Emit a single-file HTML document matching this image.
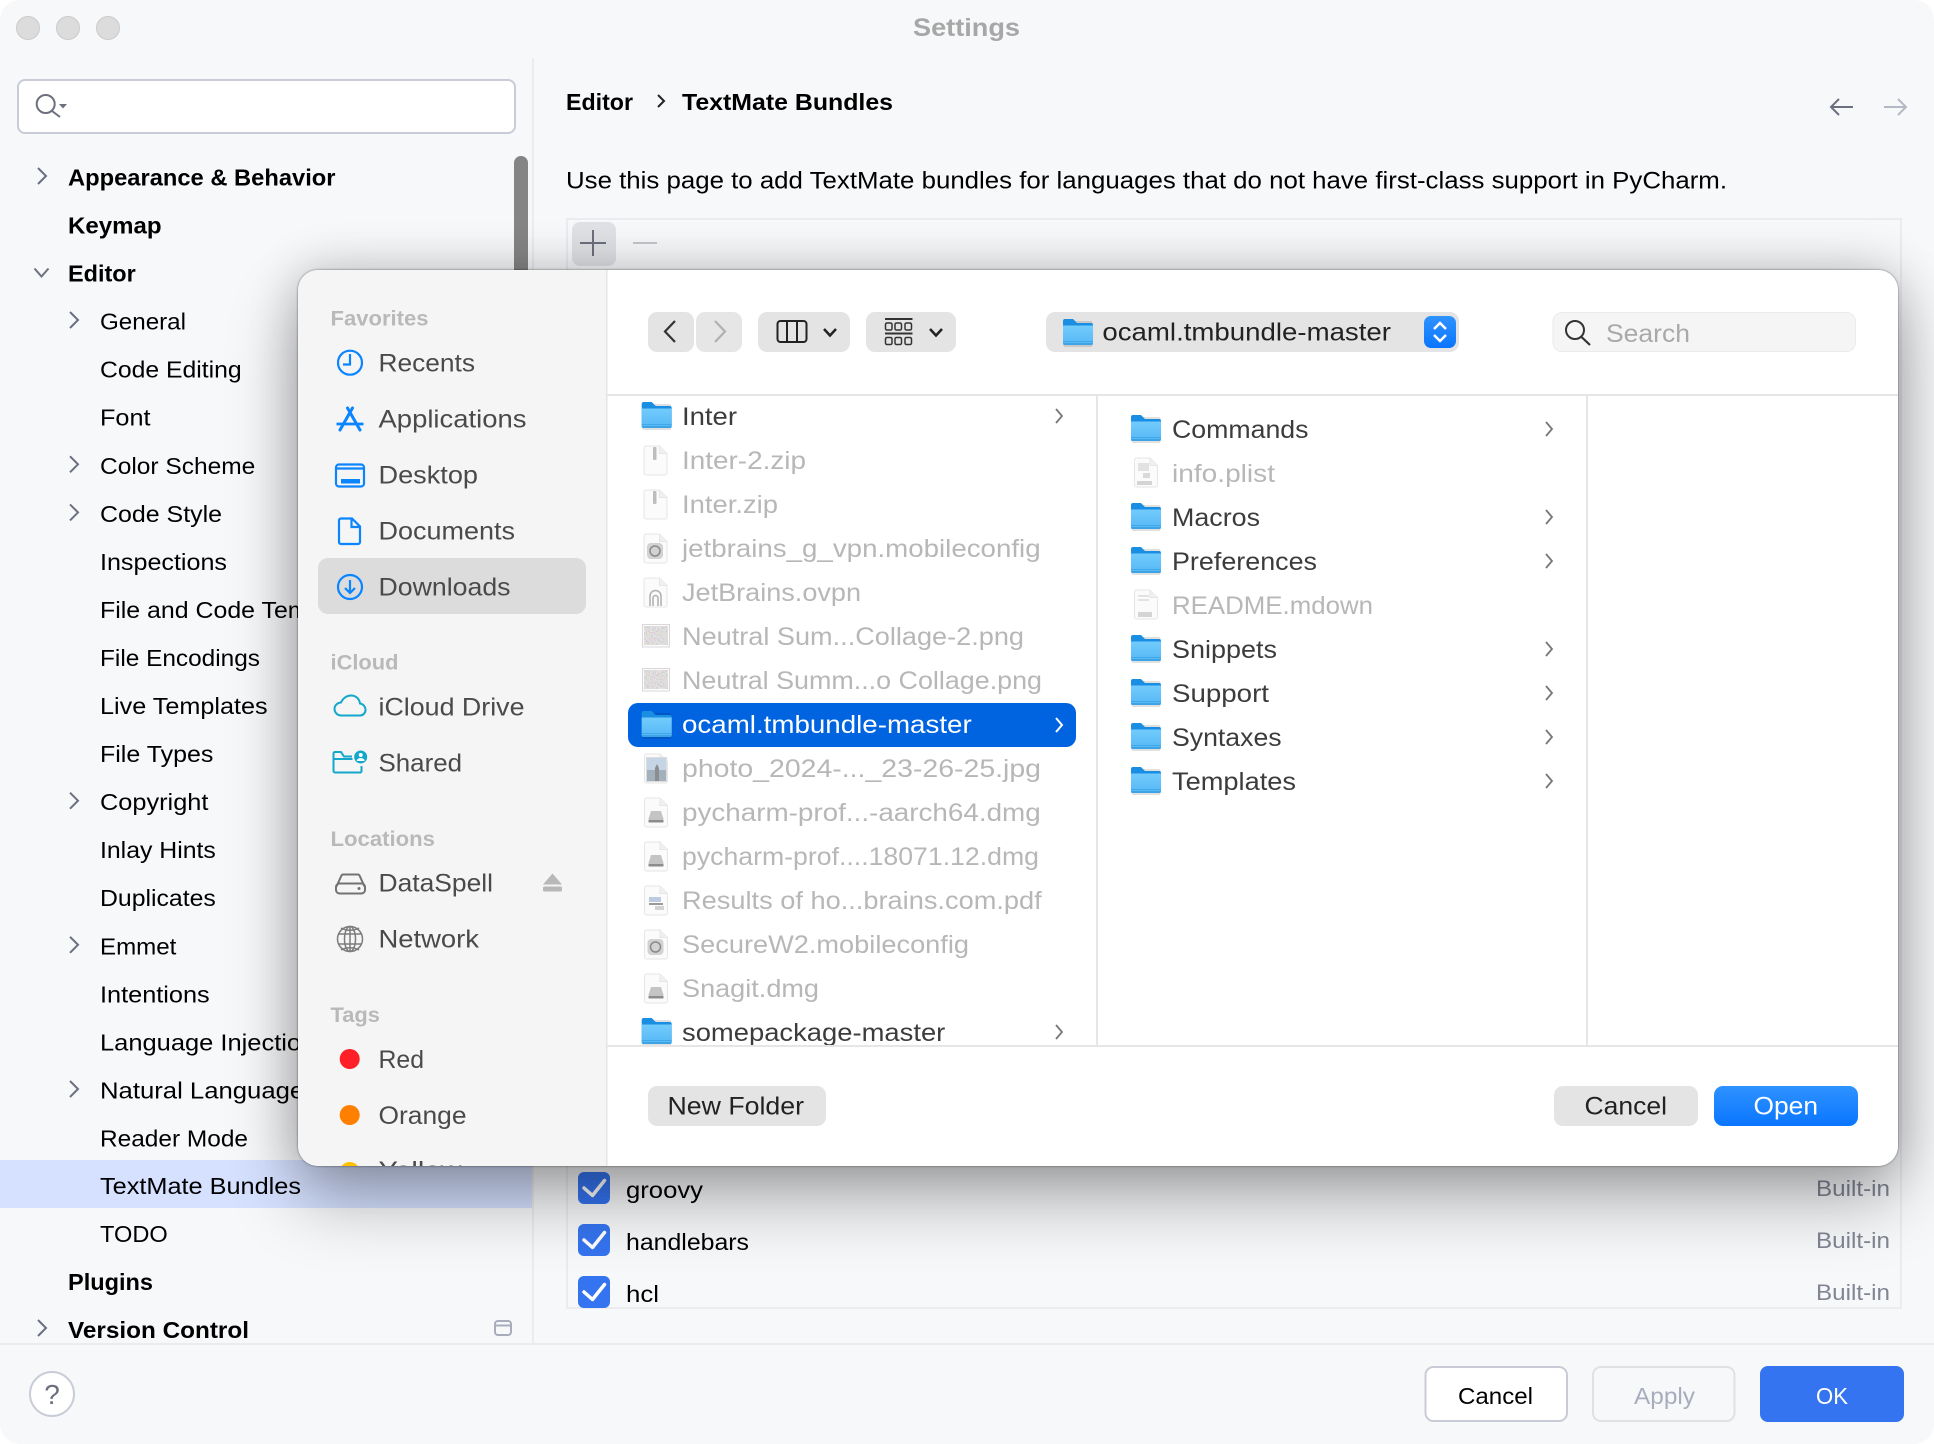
<!DOCTYPE html>
<html><head><meta charset="utf-8"><title>Settings</title>
<style>
html,body{margin:0;padding:0;background:#fff;width:1934px;height:1444px;overflow:hidden}
svg{position:absolute;left:0;top:0}
text{font-family:"Liberation Sans",sans-serif}
#sh{position:absolute;left:298px;top:270px;width:1600px;height:896px;border-radius:20px;box-shadow:0 34px 70px rgba(0,0,0,.30),0 0 50px rgba(0,0,0,.20),0 0 2px rgba(0,0,0,.55)}
.s text{font-size:23.5px;fill:#000}
.s .b{font-weight:bold}
.d text{font-size:25px;fill:#3c3c3c}
.d .f{fill:#b7b7b7}
.d .h{font-size:21px;font-weight:bold;fill:#b9b9b9}
.d .n{fill:#4a4a4a}
</style></head><body>
<svg class="s" width="1934" height="1444" viewBox="0 0 1934 1444">
<rect width="1934" height="1444" rx="20" fill="#f7f8fa"/>
<circle cx="28" cy="28" r="11.5" fill="#dcdcdc" stroke="#cbcbcb"/><circle cx="68" cy="28" r="11.5" fill="#dcdcdc" stroke="#cbcbcb"/><circle cx="108" cy="28" r="11.5" fill="#dcdcdc" stroke="#cbcbcb"/>
<text x="913" y="36" textLength="107" lengthAdjust="spacingAndGlyphs" style="font-size:25px;font-weight:bold;fill:#a7a7a7">Settings</text>
<rect x="532" y="58" width="2" height="1286" fill="#ebecf0"/>
<rect x="0" y="1343" width="1934" height="2" fill="#ebecf0"/>
<rect x="18" y="80" width="497" height="53" rx="7" fill="#fff" stroke="#c9ccd6" stroke-width="2"/>
<g fill="none" stroke="#6c707e" stroke-width="2"><circle cx="45.7" cy="104" r="9"/><path d="M52 111l8 6"/></g><path d="M59 104h8l-4 4.500z" fill="#6c707e"/>
<rect x="514" y="156" width="14" height="150" rx="7" fill="#858585"/>
<rect x="0" y="1160" width="532" height="48" fill="#d5e1ff"/>
<g fill="none" stroke="#6c707e" stroke-width="2"><path d="M38 168l8 8-8 8M34.500 268.500l7 8 7-8M70 312l8 8-8 8M70 456.300l8 8-8 8M70 504.400l8 8-8 8M70 792.700l8 8-8 8M70 936.800l8 8-8 8M70 1081l8 8-8 8M38 1320l8 8-8 8"/></g>
<text class="b" x="68" y="185.500" textLength="267.500" lengthAdjust="spacingAndGlyphs">Appearance &amp; Behavior</text>
<text class="b" x="68" y="233.500" textLength="93.600" lengthAdjust="spacingAndGlyphs">Keymap</text>
<text class="b" x="68" y="281.600" textLength="67.700" lengthAdjust="spacingAndGlyphs">Editor</text>
<text x="100" y="329.600" textLength="86" lengthAdjust="spacingAndGlyphs">General</text>
<text x="100" y="377.700" textLength="141.700" lengthAdjust="spacingAndGlyphs">Code Editing</text>
<text x="100" y="425.700" textLength="50.500" lengthAdjust="spacingAndGlyphs">Font</text>
<text x="100" y="473.800" textLength="155.300" lengthAdjust="spacingAndGlyphs">Color Scheme</text>
<text x="100" y="521.800" textLength="122" lengthAdjust="spacingAndGlyphs">Code Style</text>
<text x="100" y="569.900" textLength="127" lengthAdjust="spacingAndGlyphs">Inspections</text>
<text x="100" y="617.900" textLength="275" lengthAdjust="spacingAndGlyphs">File and Code Templates</text>
<text x="100" y="666" textLength="160" lengthAdjust="spacingAndGlyphs">File Encodings</text>
<text x="100" y="714" textLength="167.600" lengthAdjust="spacingAndGlyphs">Live Templates</text>
<text x="100" y="762.100" textLength="113.400" lengthAdjust="spacingAndGlyphs">File Types</text>
<text x="100" y="810.100" textLength="108.400" lengthAdjust="spacingAndGlyphs">Copyright</text>
<text x="100" y="858.200" textLength="115.800" lengthAdjust="spacingAndGlyphs">Inlay Hints</text>
<text x="100" y="906.200" textLength="115.800" lengthAdjust="spacingAndGlyphs">Duplicates</text>
<text x="100" y="954.300" textLength="76.400" lengthAdjust="spacingAndGlyphs">Emmet</text>
<text x="100" y="1002.300" textLength="109.700" lengthAdjust="spacingAndGlyphs">Intentions</text>
<text x="100" y="1050.400" textLength="228" lengthAdjust="spacingAndGlyphs">Language Injections</text>
<text x="100" y="1098.400" textLength="217" lengthAdjust="spacingAndGlyphs">Natural Languages</text>
<text x="100" y="1146.500" textLength="148" lengthAdjust="spacingAndGlyphs">Reader Mode</text>
<text x="100" y="1194" textLength="201" lengthAdjust="spacingAndGlyphs">TextMate Bundles</text>
<text x="100" y="1242" textLength="67.700" lengthAdjust="spacingAndGlyphs">TODO</text>
<text class="b" x="68" y="1290" textLength="85" lengthAdjust="spacingAndGlyphs">Plugins</text>
<text class="b" x="68" y="1338" textLength="181" lengthAdjust="spacingAndGlyphs">Version Control</text>
<rect x="495" y="1321" width="16" height="14" rx="3" fill="none" stroke="#a8adbd" stroke-width="2"/><path d="M495 1325.500h16" stroke="#a8adbd" stroke-width="2"/>
<text class="b" x="566" y="110" textLength="67" lengthAdjust="spacingAndGlyphs">Editor</text>
<path d="M658 95l6 6-6 6" fill="none" stroke="#222" stroke-width="2"/>
<text class="b" x="682" y="110" textLength="211" lengthAdjust="spacingAndGlyphs">TextMate Bundles</text>
<path d="M1853 107H1831M1839 99l-8 8 8 8" fill="none" stroke="#6c707e" stroke-width="2"/>
<path d="M1884 107H1906M1898 99l8 8-8 8" fill="none" stroke="#b4b8c4" stroke-width="2"/>
<text x="566" y="188.500" textLength="1161" lengthAdjust="spacingAndGlyphs" style="font-size:24.500px">Use this page to add TextMate bundles for languages that do not have first-class support in PyCharm.</text>
<rect x="567" y="219" width="1334" height="1089" fill="none" stroke="#ebecf0" stroke-width="2"/>
<rect x="572" y="222" width="44" height="44" rx="8" fill="#dfe1e5"/>
<path d="M593 230v26M580 243h26" stroke="#6c707e" stroke-width="2"/>
<path d="M633 243h24" stroke="#c4c6cc" stroke-width="2"/>
<rect x="578" y="1172" width="32" height="32" rx="6" fill="#3574f0"/><rect x="578" y="1224" width="32" height="32" rx="6" fill="#3574f0"/><rect x="578" y="1276" width="32" height="32" rx="6" fill="#3574f0"/>
<path d="M584 1188l8.500 7.500 12-15M584 1240l8.500 7.500 12-15M584 1292l8.500 7.500 12-15" fill="none" stroke="#fff" stroke-width="3.500" stroke-linecap="round" stroke-linejoin="round"/>
<text x="626" y="1198" textLength="77" lengthAdjust="spacingAndGlyphs">groovy</text>
<text x="626" y="1250" textLength="123" lengthAdjust="spacingAndGlyphs">handlebars</text>
<text x="626" y="1302" textLength="33" lengthAdjust="spacingAndGlyphs">hcl</text>
<text x="1816" y="1196" textLength="74" lengthAdjust="spacingAndGlyphs" style="font-size:22.500px;fill:#818594">Built-in</text>
<text x="1816" y="1248" textLength="74" lengthAdjust="spacingAndGlyphs" style="font-size:22.500px;fill:#818594">Built-in</text>
<text x="1816" y="1300" textLength="74" lengthAdjust="spacingAndGlyphs" style="font-size:22.500px;fill:#818594">Built-in</text>
<circle cx="52" cy="1394" r="22" fill="#fff" stroke="#c9ccd6" stroke-width="2"/>
<text x="52" y="1404" text-anchor="middle" style="font-size:28px;fill:#6c707e">?</text>
<rect x="1425.500" y="1367" width="141.500" height="54" rx="8" fill="#fff" stroke="#c9ccd6" stroke-width="2"/>
<text x="1458" y="1404" textLength="75" lengthAdjust="spacingAndGlyphs">Cancel</text>
<rect x="1593" y="1367" width="141.500" height="54" rx="8" fill="none" stroke="#dfe1e5" stroke-width="2"/>
<text x="1634" y="1404" textLength="61" lengthAdjust="spacingAndGlyphs" style="fill:#a8adbd">Apply</text>
<rect x="1760" y="1366" width="144" height="56" rx="8" fill="#3574f0"/>
<text x="1816" y="1404" textLength="32" lengthAdjust="spacingAndGlyphs" style="fill:#fff">OK</text>
</svg>
<div id="sh"></div>
<svg class="d" width="1934" height="1444" viewBox="0 0 1934 1444">
<defs>
<clipPath id="dc"><rect x="298" y="270" width="1600" height="896" rx="20"/></clipPath>
<clipPath id="lc"><rect x="607" y="396" width="1291" height="649"/></clipPath>
<linearGradient id="fg" x1="0" y1="0" x2="0" y2="1"><stop offset="0" stop-color="#72cbfc"/><stop offset="1" stop-color="#56b8f5"/></linearGradient>
<linearGradient id="og" x1="0" y1="0" x2="0" y2="1"><stop offset="0" stop-color="#2e92ff"/><stop offset="1" stop-color="#0a76ff"/></linearGradient>
<filter id="nz" x="0" y="0" width="1" height="1"><feTurbulence type="fractalNoise" baseFrequency=".7" numOctaves="2" seed="4"/><feColorMatrix type="matrix" values=".7 0 0 0 .38  0 .7 0 0 .36  0 0 .7 0 .36  0 0 0 0 1"/></filter>
<symbol id="fo" width="30" height="28" viewBox="0 0 30 28" overflow="visible">
<rect x="0.500" y="2" width="29" height="26" rx="2" fill="#000" opacity=".12"/>
<path d="M0 2a2 2 0 0 1 2-2h8l4 4h14a2 2 0 0 1 2 2v18a2 2 0 0 1-2 2H2a2 2 0 0 1-2-2z" fill="#1a8ee2"/>
<path d="M0 6.500h30v17.500a2 2 0 0 1-2 2H2a2 2 0 0 1-2-2z" fill="url(#fg)"/>
<rect x="0" y="22" width="30" height="1" fill="#3fa7ea"/>
<path d="M0 24h30a2 2 0 0 1-2 2H2a2 2 0 0 1-2-2z" fill="#3ca3e6"/>
</symbol>
<symbol id="dp" width="26" height="30" viewBox="0 0 26 30" overflow="visible">
<path d="M1.500 2a2 2 0 0 1 2-2H17l7.500 7.500V27a2 2 0 0 1-2 2h-19a2 2 0 0 1-2-2z" fill="#fbfbfb" stroke="#e6e6e6"/>
<path d="M17 0v7.500h7.500" fill="#f0f0f0" stroke="#e6e6e6"/>
</symbol>
<symbol id="zp" width="26" height="30" viewBox="0 0 26 30" overflow="visible"><use href="#dp"/><rect x="10.500" y="1" width="3.500" height="13" rx="1" fill="#bdbdbd"/></symbol>
<symbol id="cf" width="26" height="30" viewBox="0 0 26 30" overflow="visible"><use href="#dp"/><rect x="4.500" y="9" width="16" height="16" rx="4" fill="#d2d2d2"/><circle cx="12.500" cy="17" r="5" fill="none" stroke="#8a8a8a" stroke-width="1.500"/></symbol>
<symbol id="dm" width="26" height="30" viewBox="0 0 26 30" overflow="visible"><use href="#dp"/><path d="M8 13h10l2.500 8v4h-15v-4z" fill="#c4c4c4"/><rect x="5.500" y="22" width="15" height="2" fill="#8c8c8c"/></symbol>
<symbol id="tb" width="28" height="23" viewBox="0 0 28 23" overflow="visible">
<rect x="0.500" y="0.500" width="27" height="22.500" fill="#fbfbfb" stroke="#d8d8d8"/>
<rect x="2" y="2" width="24" height="19" fill="#b4aea4" filter="url(#nz)"/>
</symbol>
</defs>
<g clip-path="url(#dc)">
<rect x="298" y="270" width="309" height="896" fill="#f5f5f5"/>
<rect x="607" y="270" width="1291" height="896" fill="#fff"/>
<rect x="606" y="270" width="1.500" height="896" fill="#e4e4e4"/>
<rect x="318" y="558" width="268" height="56" rx="10" fill="#dcdcdc"/>

<text class="h" x="330.500" y="325.700" textLength="98" lengthAdjust="spacingAndGlyphs">Favorites</text>
<text class="n" x="378.500" y="371.700" textLength="96.500" lengthAdjust="spacingAndGlyphs">Recents</text>
<text class="n" x="378.500" y="427.700" textLength="148" lengthAdjust="spacingAndGlyphs">Applications</text>
<text class="n" x="378.500" y="483.700" textLength="99.500" lengthAdjust="spacingAndGlyphs">Desktop</text>
<text class="n" x="378.500" y="539.700" textLength="136.500" lengthAdjust="spacingAndGlyphs">Documents</text>
<text class="n" x="378.500" y="595.700" textLength="132" lengthAdjust="spacingAndGlyphs">Downloads</text>
<text class="h" x="330.500" y="669.500" textLength="68" lengthAdjust="spacingAndGlyphs">iCloud</text>
<text class="n" x="378.500" y="715.500" textLength="146" lengthAdjust="spacingAndGlyphs">iCloud Drive</text>
<text class="n" x="378.500" y="771.500" textLength="83.500" lengthAdjust="spacingAndGlyphs">Shared</text>
<text class="h" x="330.500" y="846" textLength="104.500" lengthAdjust="spacingAndGlyphs">Locations</text>
<text class="n" x="378.500" y="891.700" textLength="114.500" lengthAdjust="spacingAndGlyphs">DataSpell</text>
<text class="n" x="378.500" y="947.700" textLength="100.500" lengthAdjust="spacingAndGlyphs">Network</text>
<text class="h" x="330.500" y="1022" textLength="49.500" lengthAdjust="spacingAndGlyphs">Tags</text>
<text class="n" x="378.500" y="1068" textLength="45.500" lengthAdjust="spacingAndGlyphs">Red</text>
<text class="n" x="378.500" y="1124" textLength="88" lengthAdjust="spacingAndGlyphs">Orange</text>
<text class="n" x="378.500" y="1179" textLength="83" lengthAdjust="spacingAndGlyphs">Yellow</text>

<g fill="none" stroke="#0a84ff" stroke-width="2.200">
<circle cx="350" cy="362.700" r="12"/><path d="M350 354v10.500h-7"/>
<circle cx="350" cy="587" r="12"/><path d="M350 580v12.500M345 588l5 5 5-5"/>
<path d="M336.500 424h27" stroke-width="2.800"/><path d="M347.500 408l12.500 22M352.500 408l-12.500 22" stroke-width="3" stroke-linecap="round"/>
<rect x="336" y="464.500" width="28" height="22" rx="3"/><path d="M336 468.500h28" />
<path d="M342 519h10l8 8v15.500a2 2 0 0 1-2 2h-17a2 2 0 0 1-2-2V521a2 2 0 0 1 2-2zM351.500 519v8.500h8.500" transform="translate(0 -.5)"/>
</g>
<rect x="341" y="479" width="19" height="4.500" fill="#0a84ff"/>
<g fill="none" stroke="#12a7cb" stroke-width="2">
<path transform="translate(0 2)" d="M341.500 713.500C336.500 713.500 334.500 709.500 334.500 707C334.500 703 338 700.500 341 700.500C343 696 347 693.500 351 693.500C356.500 693.500 359.500 697.500 360 701.500C363.500 702 365.500 705 365.500 708C365.500 711 363 713.500 360 713.500Z"/>
<path transform="translate(0 4)" d="M352 752.500H344l-3-4.500h-6a1.500 1.500 0 0 0-1.500 1.500V767a1.500 1.500 0 0 0 1.500 1.500h25.500A1.500 1.500 0 0 0 361.500 767v-5M333.500 755h19"/>
</g>
<g transform="translate(0 4)"><circle cx="360.700" cy="753" r="6.500" fill="#12a7cb"/><circle cx="360.700" cy="751" r="2" fill="#fff"/><path d="M356.700 757a4 3 0 0 1 8 0z" fill="#fff"/></g>
<g fill="none" stroke="#727272" stroke-width="2" transform="translate(0 7.500)">
<rect x="336" y="876" width="29" height="10" rx="3.500"/><path d="M336.500 879l5-11a2 2 0 0 1 2-1h14a2 2 0 0 1 2 1l5 11"/>
</g><circle cx="359" cy="888.500" r="1.500" fill="#727272"/>
<g fill="none" stroke="#7c7c7c" stroke-width="1.500" transform="translate(0 10)">
<circle cx="350" cy="929" r="12.500"/><ellipse cx="350" cy="929" rx="5.500" ry="12.500"/><path d="M338 924h24M338 934h24M341 918c5 3 13 3 18 0M341 940c5-3 13-3 18 0M350 916.500v25"/>
</g>
<g transform="translate(0 7.500)"><path d="M552.500 866l9.500 11h-19z" fill="#b8b8b8"/><rect x="543" y="879" width="19" height="5" rx="1.500" fill="#b8b8b8"/></g>
<circle cx="349.700" cy="1059" r="10" fill="#ff1f26"/>
<circle cx="349.700" cy="1115" r="10" fill="#ff8000"/>
<circle cx="349.700" cy="1172" r="10" fill="#ffc000"/>

<rect x="648" y="312" width="46" height="40" rx="9" fill="#e4e4e4"/>
<rect x="696" y="312" width="46" height="40" rx="9" fill="#e6e6e6"/>
<rect x="758" y="312" width="92" height="40" rx="9" fill="#e4e4e4"/>
<rect x="866" y="312" width="90" height="40" rx="9" fill="#e4e4e4"/>
<rect x="1046" y="312" width="413" height="40" rx="9" fill="#e4e4e4"/>
<path d="M675 321l-10 10.500 10 10.500" fill="none" stroke="#333" stroke-width="2.200"/>
<path d="M715 321l10 10.500-10 10.500" fill="none" stroke="#b0b0b0" stroke-width="2.200"/>
<g fill="none" stroke="#222" stroke-width="2">
<rect x="777.500" y="321" width="29" height="21" rx="3"/><path d="M787 321v21M797 321v21"/>
<path d="M824 329l6 6.500 6-6.500M930 329l6 6.500 6-6.500" stroke-width="2.500"/>
</g>
<g fill="none" stroke="#333" stroke-width="1.500">
<path d="M885 319h27.500M885 333.500h27.500" stroke-width="2"/>
<rect x="885.500" y="323" width="6.500" height="7" rx="1.500"/><rect x="895" y="323" width="6.500" height="7" rx="1.500"/><rect x="905" y="323" width="6.500" height="7" rx="1.500"/>
<rect x="885.500" y="337.500" width="6.500" height="7" rx="1.500"/><rect x="895" y="337.500" width="6.500" height="7" rx="1.500"/><rect x="905" y="337.500" width="6.500" height="7" rx="1.500"/>
</g>
<use href="#fo" x="1063" y="319"/>
<text x="1102.400" y="340.500" textLength="288.600" lengthAdjust="spacingAndGlyphs" style="fill:#222">ocaml.tmbundle-master</text>
<rect x="1424" y="316" width="32" height="32" rx="7" fill="url(#og)"/>
<path d="M1434 329l6-6 6 6M1434 335l6 6 6-6" fill="none" stroke="#fff" stroke-width="2.500"/>
<rect x="1553" y="312.500" width="302.500" height="39" rx="9" fill="#f5f5f5" stroke="#ebebeb"/>
<circle cx="1575" cy="330" r="9" fill="none" stroke="#333" stroke-width="2"/><path d="M1581.500 337l8.500 8" stroke="#333" stroke-width="2.200"/>
<text x="1606" y="342" textLength="84" lengthAdjust="spacingAndGlyphs" style="fill:#a9a9a9">Search</text>

<rect x="607" y="394" width="1291" height="2" fill="#e6e6e6"/>
<rect x="1096" y="395" width="2" height="650" fill="#e6e6e6"/>
<rect x="1586" y="395" width="2" height="650" fill="#e6e6e6"/>

<g clip-path="url(#lc)">
<rect x="628" y="703" width="448" height="44" rx="10" fill="#0064e1"/>
<use href="#fo" x="641.700" y="402"/>
<use href="#zp" x="642.500" y="446"/>
<use href="#zp" x="642.500" y="490"/>
<use href="#cf" x="642.500" y="534"/>
<use href="#dp" x="642.500" y="578"/><path d="M650 606v-10a5.500 5.500 0 0 1 11 0v10M653 606v-8a2.500 2.500 0 0 1 5 0v8" fill="none" stroke="#b0b0b0" stroke-width="1.500"/>
<use href="#tb" x="642" y="624"/>
<use href="#tb" x="642" y="668"/>
<use href="#fo" x="641.700" y="711"/>
<use href="#dp" x="643" y="754"/><rect x="647" y="758" width="19" height="23" fill="#a3b1bd"/><rect x="647" y="758" width="19" height="12" fill="#c5d5e6"/><path d="M655 781v-13l2-4 2 4v13z" fill="#8b8d90"/><rect x="646.500" y="757.500" width="20" height="24" fill="none" stroke="#dcdcdc"/>
<use href="#dm" x="643" y="798"/>
<use href="#dm" x="643" y="842"/>
<use href="#dp" x="643" y="886"/><rect x="649" y="897" width="12" height="5" fill="#bccbe2"/><rect x="649" y="903" width="14" height="2" fill="#9a9a9a"/><rect x="655" y="906" width="9" height="4" fill="#d2d2d2"/>
<use href="#cf" x="643" y="930"/>
<use href="#dm" x="643" y="974"/>
<use href="#fo" x="641.700" y="1018"/>

<text x="682" y="425" textLength="55" lengthAdjust="spacingAndGlyphs">Inter</text>
<text class="f" x="682" y="469" textLength="124" lengthAdjust="spacingAndGlyphs">Inter-2.zip</text>
<text class="f" x="682" y="513" textLength="96" lengthAdjust="spacingAndGlyphs">Inter.zip</text>
<text class="f" x="682" y="557" textLength="358.600" lengthAdjust="spacingAndGlyphs">jetbrains_g_vpn.mobileconfig</text>
<text class="f" x="682" y="601" textLength="179" lengthAdjust="spacingAndGlyphs">JetBrains.ovpn</text>
<text class="f" x="682" y="645" textLength="342" lengthAdjust="spacingAndGlyphs">Neutral Sum...Collage-2.png</text>
<text class="f" x="682" y="689" textLength="360" lengthAdjust="spacingAndGlyphs">Neutral Summ...o Collage.png</text>
<text x="682" y="733" textLength="289.700" lengthAdjust="spacingAndGlyphs" style="fill:#fff">ocaml.tmbundle-master</text>
<text class="f" x="682" y="777" textLength="359" lengthAdjust="spacingAndGlyphs">photo_2024-..._23-26-25.jpg</text>
<text class="f" x="682" y="821" textLength="358.700" lengthAdjust="spacingAndGlyphs">pycharm-prof...-aarch64.dmg</text>
<text class="f" x="682" y="865" textLength="357" lengthAdjust="spacingAndGlyphs">pycharm-prof....18071.12.dmg</text>
<text class="f" x="682" y="909" textLength="359.700" lengthAdjust="spacingAndGlyphs">Results of ho...brains.com.pdf</text>
<text class="f" x="682" y="953" textLength="287" lengthAdjust="spacingAndGlyphs">SecureW2.mobileconfig</text>
<text class="f" x="682" y="997" textLength="137" lengthAdjust="spacingAndGlyphs">Snagit.dmg</text>
<text x="682" y="1041" textLength="263.300" lengthAdjust="spacingAndGlyphs">somepackage-master</text>

<path d="M1056 409l6 7-6 7M1056 1025l6 7-6 7" fill="none" stroke="#777" stroke-width="1.800"/>
<path d="M1056 718l6 7-6 7" fill="none" stroke="#fff" stroke-width="2"/>

<use href="#fo" x="1131" y="415"/>
<use href="#dp" x="1133" y="458"/><rect x="1138" y="463" width="11" height="8" fill="#e2e2e2"/><rect x="1143" y="473" width="7" height="5" fill="#dadada"/><rect x="1137" y="481" width="15" height="4" fill="#d4d4d4"/>
<use href="#fo" x="1131" y="503"/>
<use href="#fo" x="1131" y="547"/>
<use href="#dp" x="1133" y="590"/><rect x="1138" y="595" width="11" height="2" fill="#e2e2e2"/><rect x="1138" y="599" width="11" height="2" fill="#e2e2e2"/><rect x="1138" y="612" width="14" height="5" fill="#d4d4d4"/>
<use href="#fo" x="1131" y="635"/>
<use href="#fo" x="1131" y="679"/>
<use href="#fo" x="1131" y="723"/>
<use href="#fo" x="1131" y="767"/>

<text x="1172" y="438" textLength="136.500" lengthAdjust="spacingAndGlyphs">Commands</text>
<text class="f" x="1172" y="482" textLength="103" lengthAdjust="spacingAndGlyphs">info.plist</text>
<text x="1172" y="526" textLength="88" lengthAdjust="spacingAndGlyphs">Macros</text>
<text x="1172" y="570" textLength="145" lengthAdjust="spacingAndGlyphs">Preferences</text>
<text class="f" x="1172" y="614" textLength="201" lengthAdjust="spacingAndGlyphs">README.mdown</text>
<text x="1172" y="658" textLength="105" lengthAdjust="spacingAndGlyphs">Snippets</text>
<text x="1172" y="702" textLength="97" lengthAdjust="spacingAndGlyphs">Support</text>
<text x="1172" y="746" textLength="109.600" lengthAdjust="spacingAndGlyphs">Syntaxes</text>
<text x="1172" y="790" textLength="124" lengthAdjust="spacingAndGlyphs">Templates</text>
<path d="M1546 422l6 7-6 7M1546 510l6 7-6 7M1546 554l6 7-6 7M1546 642l6 7-6 7M1546 686l6 7-6 7M1546 730l6 7-6 7M1546 774l6 7-6 7" fill="none" stroke="#777" stroke-width="1.800"/>
</g>

<rect x="607" y="1045" width="1291" height="2" fill="#e6e6e6"/>
<rect x="648" y="1086" width="178" height="40" rx="9" fill="#e4e4e4"/>
<text x="667.500" y="1114.500" textLength="136.500" lengthAdjust="spacingAndGlyphs" style="fill:#222">New Folder</text>
<rect x="1554" y="1086" width="144" height="40" rx="9" fill="#e4e4e4"/>
<text x="1584.500" y="1114.500" textLength="82.500" lengthAdjust="spacingAndGlyphs" style="fill:#222">Cancel</text>
<rect x="1714" y="1086" width="144" height="40" rx="9" fill="url(#og)"/>
<text x="1753.500" y="1114.500" textLength="64.500" lengthAdjust="spacingAndGlyphs" style="fill:#fff">Open</text>
</g>
</svg>
</body></html>
